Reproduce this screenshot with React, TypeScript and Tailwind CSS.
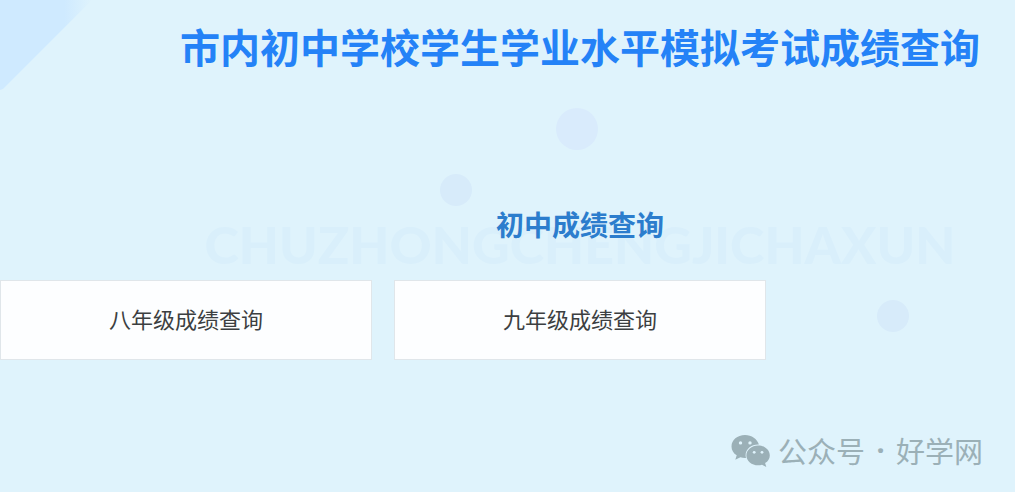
const grades = ["八年级成绩查询", "九年级成绩查询"];

function WeChatIcon() {
  return (
    <svg viewBox="0 0 40 34" className="mt-0.5 h-[34px] w-10 shrink-0" aria-hidden="true">
      <path
        fill="#9bb0b7"
        d="M15 1C7.300 1 1.500 6 1.500 12.400c0 3.700 2 6.800 5.200 8.900L5.300 25.800l5.100-2.600c1.500.4 3 .7 4.600.7h1a9.500 9.500 0 0 1-.4-2.600c0-6 5.600-10.700 12.400-10.700h.9C27.200 5 21.700 1 15 1Z"
      />
      <path
        fill="#9bb0b7"
        d="M39.800 21.400c0-5.400-5.300-9.900-11.700-9.900s-11.700 4.500-11.700 9.900 5.300 9.900 11.700 9.900c1.400 0 2.700-.2 3.900-.6l4.300 2.200-1.200-3.800c2.900-1.800 4.700-4.600 4.700-7.700Z"
      />
      <g fill="#dff3fc">
        <circle cx="10.500" cy="8.900" r="1.700" />
        <circle cx="20" cy="8.900" r="1.700" />
        <circle cx="24.200" cy="18.300" r="1.400" />
        <circle cx="32" cy="18.300" r="1.400" />
      </g>
    </svg>
  );
}

function Backdrop() {
  return (
    <div className="pointer-events-none absolute inset-0" aria-hidden="true">
      <svg viewBox="0 0 92 92" className="absolute top-0 left-0 size-[92px]">
        <defs>
          <linearGradient id="corner" x1="0" y1="0" x2="1" y2="0">
            <stop offset="0.7" stopColor="#cfeaff" />
            <stop offset="1" stopColor="#dff3fc" />
          </linearGradient>
        </defs>
        <path d="M0 0H92L3 89L0 90Z" fill="url(#corner)" />
      </svg>
      <span className="absolute top-[108px] left-[556px] size-[42px] rounded-full bg-[#d9ebfc]" />
      <span className="absolute top-[174px] left-[440px] size-8 rounded-full bg-[#d7ebfa]" />
      <span className="absolute top-[300px] left-[877px] size-8 rounded-full bg-[#d7ebfa]" />
    </div>
  );
}

export default function App() {
  return (
    <div className="relative flex min-h-screen flex-col overflow-hidden bg-[#dff3fc] font-['Noto_Sans_CJK_SC',sans-serif]">
      <Backdrop />
      <header className="relative pt-[14px] pl-[145px] text-center">
        <h1 className="text-[40px] leading-[64px] font-bold whitespace-nowrap text-[#2482f7]">
          市内初中学校学生学业水平模拟考试成绩查询
        </h1>
      </header>
      <main className="relative pt-[126px]">
        <div className="grid justify-items-center pl-[145px]">
          <p
            className="col-start-1 row-start-1 pt-2 font-['Lato',sans-serif] text-[52px] leading-[64px] font-black whitespace-nowrap text-[#d9effb]"
            aria-hidden="true"
          >
            CHUZHONGCHENGJICHAXUN
          </p>
          <h2 className="z-10 col-start-1 row-start-1 text-[28px] leading-10 font-bold text-[#2c7dcd]">
            初中成绩查询
          </h2>
        </div>
        <nav className="mt-1 mr-[249px] grid grid-cols-2 gap-[22px]">
          {grades.map((label) => (
            <button
              key={label}
              type="button"
              className="h-20 cursor-pointer border border-[#e0e6ea] bg-[#fdfeff] pb-1 text-[22px] leading-8 text-[#3c3f41]"
            >
              {label}
            </button>
          ))}
        </nav>
      </main>
      <footer className="relative mt-auto flex items-center justify-end pr-8 pb-5 text-[29px] leading-[44px] whitespace-nowrap text-[#9bb0b7]">
        <WeChatIcon />
        <span className="ml-2">公众号</span>
        <span className="w-[31px] text-center font-['Noto_Sans',sans-serif] font-bold">·</span>
        <span>好学网</span>
      </footer>
    </div>
  );
}
